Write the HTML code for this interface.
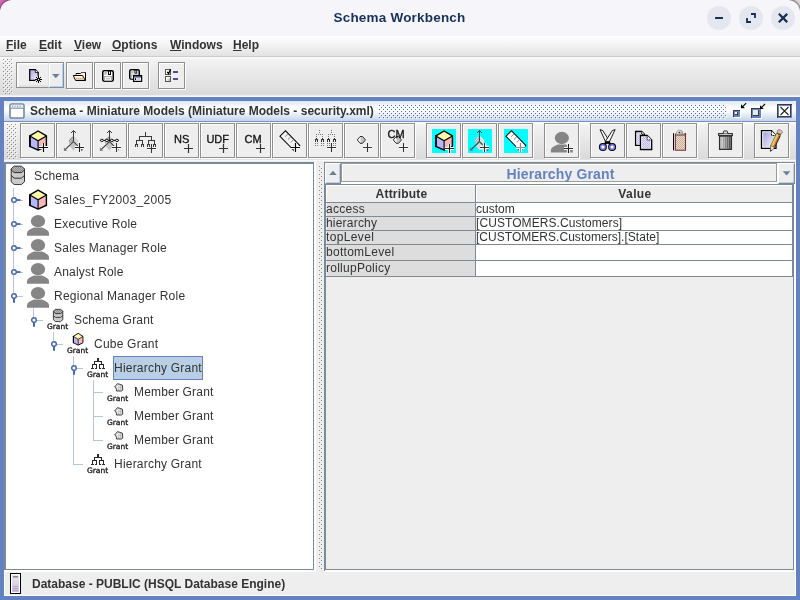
<!DOCTYPE html>
<html lang="en"><head><meta charset="utf-8"><title>Schema Workbench</title>
<style>
*{margin:0;padding:0;box-sizing:border-box}
html,body{width:800px;height:600px;overflow:hidden}
body{position:relative;background:#f6f6fa;font-family:"Liberation Sans",sans-serif;font-size:12px;color:#333;line-height:1}
.a{position:absolute}
.t{position:absolute;white-space:nowrap;line-height:14px;height:14px}
.b{font-weight:bold}
u{text-decoration:underline;text-decoration-thickness:1px;text-underline-offset:1px}
/* window title */
#corner-l{left:0;top:0;width:16px;height:16px;background:linear-gradient(135deg,#cf6fb8,#b85aa4)}
#corner-r{right:0;top:0;width:16px;height:16px;background:linear-gradient(225deg,#dedcd6,#bab7b0)}
#titlebar{left:0;top:0;width:800px;height:36px;background:#f6f6fa;box-shadow:0 0 1.500px 0.500px rgba(70,20,70,.55);border-radius:12px 12px 0 0}
#wtitle{left:0;width:799px;top:9.500px;text-align:center;letter-spacing:.2px;font-size:13.500px;line-height:16px;height:16px;color:#17325a;font-weight:bold}
.wb{width:24px;height:24px;border-radius:12px;background:#e4e7ef;top:6px}
#menubar{left:0;top:36px;width:800px;height:20px;background:linear-gradient(#ffffff,#f4f4f4 40%,#e2e2e2)}
#menuline{left:0;top:56px;width:800px;height:1px;background:#cccccc}
#tb1{left:0;top:57px;width:800px;height:40px;background:linear-gradient(#fbfbfb,#f2f2f2 8%,#dadada 95%,#fafafa 97%)}
.btn{position:absolute;border:1px solid #8e8e8e;background:#eeeeee;box-shadow:inset 1px 1px 0 #fff,1px 1px 0 #fff}
.btn svg{position:absolute;left:0;top:0}
/* internal frame */
#frame{left:0;top:97px;width:800px;height:503px;background:#6382bf}
#finner{left:4px;top:101px;width:792px;height:495px;background:#fff}
#ftitle{left:4px;top:101px;width:792px;height:20px;background:linear-gradient(#dde7f4,#ffffff 35%,#fbfcfe 50%,#c3d4eb);border-radius:3px 3px 0 0}
#fbody{left:5px;top:122px;width:790px;height:473px;background:#eeeeee}
#tb2{left:4px;top:122px;width:792px;height:40px;background:linear-gradient(#fdfdfd,#f2f2f2 8%,#dadada 93%,#fafafa 96%,#e6e6e6)}
.bumps{background-image:radial-gradient(circle at 1px 1px,#6382bf 0.9px,transparent 1.1px);background-size:4px 4px}
.dots{background-image:radial-gradient(circle at 1px 1px,#9aa4ae 0.8px,transparent 1.1px),radial-gradient(circle at 3px 3px,#9aa4ae 0.8px,transparent 1.1px);background-size:4px 4px}
#tree{left:4px;top:162px;width:310px;height:408px;background:#fff;border:1px solid #7a8a99;border-left-width:2px;border-top-width:2px}
#rpane{left:324px;top:162px;width:471px;height:408px;background:#eeeeee;border-top:1px solid #7a8a99;border-left:1px solid #7a8a99}
.vl{position:absolute;width:1px;background:#b2c5df}
.hl{position:absolute;height:1px;background:#b2c5df}
.tl{background:#7a8a99;position:absolute}
.ac{position:absolute;left:327px;width:148px;background:#dddddd;height:13px}
.vc{position:absolute;left:476px;width:316px;background:#fff;height:13px}
#w{left:0;top:0;width:800px;height:600px;will-change:transform;overflow:hidden}
</style></head>
<body>
<div class="a" id="w">
<div class="a" id="corner-l"></div><div class="a" id="corner-r"></div>
<div class="a" id="titlebar"></div>
<div class="t" id="wtitle">Schema Workbench</div>
<div class="a wb" style="left:707px"><svg width="24" height="24" viewBox="0 0 24 24" ><rect x="8" y="11" width="8" height="2" rx=".5" fill="#12305a"/></svg></div>
<div class="a wb" style="left:739px"><svg width="24" height="24" viewBox="0 0 24 24" ><path d="M12 8h4v4M12 16H8v-4" stroke="#12305a" stroke-width="1.8" fill="none"/></svg></div>
<div class="a wb" style="left:771px"><svg width="24" height="24" viewBox="0 0 24 24" ><path d="M8.600 8.600l6.800 6.800M15.400 8.600l-6.800 6.800" stroke="#12305a" stroke-width="2.200" fill="none" stroke-linecap="square"/></svg></div>
<div class="a" id="menubar"></div><div class="a" id="menuline"></div>
<div class="t b" style="left:6px;top:38px"><u>F</u>ile</div>
<div class="t b" style="left:39px;top:38px"><u>E</u>dit</div>
<div class="t b" style="left:74px;top:38px"><u>V</u>iew</div>
<div class="t b" style="left:112px;top:38px"><u>O</u>ptions</div>
<div class="t b" style="left:170px;top:38px"><u>W</u>indows</div>
<div class="t b" style="left:233px;top:38px"><u>H</u>elp</div>
<div class="a" id="tb1"></div>
<div class="a" style="left:3px;top:59px;width:10px;height:35px"><svg width="10" height="35" viewBox="0 0 10 35" shape-rendering="crispEdges"><defs><pattern id="dp1" width="4" height="4" patternUnits="userSpaceOnUse"><rect x="0" y="0" width="1" height="1" fill="#8e8e8e"/><rect x="1" y="1" width="1" height="1" fill="#fff"/><rect x="2" y="2" width="1" height="1" fill="#8e8e8e"/><rect x="3" y="3" width="1" height="1" fill="#fff"/></pattern></defs><rect width="10" height="35" fill="url(#dp1)"/></svg></div>
<div class="a" style="left:16px;top:62px;width:33px;height:26px;border:1px solid #8e8e8e;border-right:none;background:#eee;box-shadow:inset 1px 1px 0 #fff,inset 2px 2px 0 #f4f4f4,inset 0 -2px 0 #e2e2e2"><svg width="31" height="24" viewBox="0 0 31 24" ><defs><linearGradient id="lav" x1="0" y1="0" x2="1" y2="1"><stop offset="0" stop-color="#a4a4dc"/><stop offset="1" stop-color="#f6f6ff"/></linearGradient></defs><path d="M12.700 6.700H18.300L21.200 9.600V17.300H12.700Z" fill="url(#lav)" stroke="#000" stroke-width="1.250" stroke-linejoin="miter"/><path d="M18.300 6.700V9.600H21.200" fill="#fff" stroke="#000" stroke-width=".8"/><circle cx="21.5" cy="16.5" r="3.200" fill="#eee"/><path d="M18.0 16.5H25.0M21.5 13.0V20.0M19.0 14.0l5 5M24.0 14.0l-5 5" stroke="#000" stroke-width="1"/><circle cx="21.5" cy="16.5" r=".7" fill="#eee"/></svg></div>
<div class="a" style="left:48px;top:62px;width:16px;height:26px;border-top:1px solid #8e8e8e;border-left:1px solid #e0e0e0;border-right:1px solid #7a8fa8;border-bottom:1px solid #7a8fa8;background:#eee;box-shadow:inset 1px 1px 0 #fff,inset -1px -1px 0 #b8cfe5"><svg width="14" height="24" viewBox="0 0 14 24" ><path d="M3 11h7.600l-3.800 4.200z" fill="#6b7f96"/></svg></div>
<div class="btn" style="left:66px;top:62px;width:27px;height:27px"><svg width="25" height="25" viewBox="0 0 25 25" ><g transform="translate(-67 -63)"><path d="M76 74.600V73.500H80.600L81.600 72.500H85.500V80.500H82" fill="#fdf3e4" stroke="#000" stroke-width="1"/><path d="M81.400 72.500H85.900" stroke="#8c2a2a" stroke-width="1"/><path d="M73.300 75.500H82.600L85.200 80.500H75.600Z" fill="#fff" stroke="#000" stroke-width="1" stroke-linejoin="round"/><path d="M75.300 77.400H83L84.200 80H76.500Z" fill="#ecc9a6"/><path d="M76 78.500h7.500" stroke="#c9a282" stroke-width="1" stroke-dasharray="1 1"/></g></svg></div>
<div class="btn" style="left:94px;top:62px;width:27px;height:27px"><svg width="25" height="25" viewBox="0 0 25 25" ><g transform="translate(-95 -63)"><rect x="102.75" y="70.75" width="10.5" height="10.5" rx="1.400" fill="#fff" stroke="#000" stroke-width="1.500"/><rect x="104.2" y="71.3" width="3.0" height="3.4" fill="#bdbdbd"/><rect x="108.0" y="71" width="3.0" height="4.0" fill="#000"/><rect x="109.0" y="71.6" width="1.0" height="2.4" fill="#fff"/><rect x="104.5" y="76.5" width="7.0" height="4.3" fill="#f6f6f6" stroke="#9a9a9a" stroke-width=".8"/><rect x="106.0" y="78.0" width="4.0" height="1.3" fill="#bdbdbd"/></g></svg></div>
<div class="btn" style="left:122px;top:62px;width:27px;height:27px"><svg width="25" height="25" viewBox="0 0 25 25" ><g transform="translate(-123 -63)"><rect x="129.75" y="69.75" width="9.5" height="9.5" rx="1.400" fill="#fff" stroke="#000" stroke-width="1.500"/><rect x="131.03333333333333" y="70.3" width="2.75" height="3.1166666666666663" fill="#bdbdbd"/><rect x="134.5" y="70" width="2.75" height="3.6666666666666665" fill="#000"/><rect x="135.41666666666666" y="70.6" width="0.9166666666666666" height="2.1999999999999997" fill="#fff"/><rect x="131.29166666666666" y="74.95833333333333" width="6.416666666666666" height="3.9416666666666664" fill="#f6f6f6" stroke="#9a9a9a" stroke-width=".8"/><rect x="132.66666666666666" y="76.33333333333333" width="3.6666666666666665" height="1.1916666666666667" fill="#bdbdbd"/><rect x="133.600" y="75.600" width="8" height="5.800" fill="#fff" stroke="#000" stroke-width="1.200"/><rect x="134.200" y="76.200" width="6.800" height="1.300" fill="#2a2a8c"/><rect x="135" y="78.200" width="1.100" height="1.800" fill="#000"/><rect x="137" y="78.400" width="3" height="1.300" fill="#bdbdbd"/></g></svg></div>
<div class="btn" style="left:158px;top:62px;width:27px;height:27px"><svg width="25" height="25" viewBox="0 0 25 25" ><g transform="translate(-159 -63)"><rect x="165.500" y="69.500" width="5" height="5" fill="#fff" stroke="#555" stroke-width="1"/><path d="M167.300 71.800l1.300 1.800 2-4.300" stroke="#000" stroke-width="1.300" fill="none"/><rect x="165.500" y="76.500" width="5" height="5" fill="#fff" stroke="#555" stroke-width="1"/><rect x="167.500" y="78.500" width="2.500" height="2.500" fill="#c8c8c8"/><rect x="173" y="71" width="5" height="2" fill="#4e4e96"/><rect x="173" y="78" width="5" height="2" fill="#4e4e96"/></g></svg></div>
<div class="a" id="frame"></div>
<div class="a" id="finner"></div>
<div class="a" id="ftitle"></div>
<div class="a" style="left:4px;top:121px;width:792px;height:1px;background:#7a8fc0"></div>
<div class="a" id="fbody"></div>
<div class="a" id="tb2"></div>
<div class="a" style="left:9px;top:103px;width:16px;height:16px"><svg width="16" height="16" viewBox="0 0 16 16" ><rect x="1" y="1" width="14" height="14" rx="1.8" fill="#fff" stroke="#7389a0" stroke-width="1.6"/><rect x="1.8" y="1.8" width="12.4" height="3" fill="#e8eef6"/><path d="M1.5 5.2h13" stroke="#7389a0" stroke-width="1"/><path d="M3 3.2h10" stroke="#7389a0" stroke-width="1" stroke-dasharray="1 1.5"/></svg></div>
<div class="t b" style="left:30px;top:104px">Schema - Miniature Models (Miniature Models - security.xml)</div>
<div class="a" style="left:378px;top:104px;width:349px;height:15px"><svg width="349" height="15" viewBox="0 0 349 15" shape-rendering="crispEdges"><defs><pattern id="bp" width="4" height="4" patternUnits="userSpaceOnUse"><rect x="0" y="0" width="1" height="1" fill="#fff"/><rect x="1" y="1" width="1" height="1" fill="#4f6fbb"/><rect x="2" y="2" width="1" height="1" fill="#fff"/><rect x="3" y="3" width="1" height="1" fill="#4f6fbb"/></pattern></defs><rect width="349" height="15" fill="url(#bp)"/></svg></div>
<div class="a" style="left:732px;top:101px;width:62px;height:20px"><svg width="62" height="20" viewBox="0 0 62 20" ><g shape-rendering="crispEdges"><rect x="2" y="10" width="7" height="7" fill="#fff"/><rect x="1" y="9" width="7" height="7" fill="#6382bf"/><rect x="1" y="9" width="7" height="1" fill="#3c3c3c"/><rect x="1" y="9" width="1" height="7" fill="#3c3c3c"/><rect x="3" y="11" width="2" height="2" fill="#fff"/><rect x="5" y="11" width="1" height="3" fill="#3c3c3c"/><rect x="3" y="13" width="3" height="1" fill="#3c3c3c"/><rect x="20" y="8" width="10" height="10" fill="#fff"/><rect x="19" y="7" width="10" height="10" fill="#6382bf"/><rect x="19" y="7" width="9" height="1" fill="#3c3c3c"/><rect x="19" y="7" width="1" height="10" fill="#3c3c3c"/><rect x="21" y="9" width="5" height="5" fill="#e6edf6"/><rect x="26" y="9" width="1" height="6" fill="#3c3c3c"/><rect x="21" y="14" width="6" height="1" fill="#3c3c3c"/><rect x="45" y="3" width="15" height="14" fill="#6382bf"/><rect x="45" y="3" width="15" height="1" fill="#3c3c3c"/><rect x="45" y="3" width="1" height="14" fill="#3c3c3c"/><rect x="47" y="5" width="11" height="10" fill="#fff"/><rect x="58" y="4" width="1" height="12" fill="#3c3c3c"/><rect x="46" y="15" width="13" height="1" fill="#3c3c3c"/></g><path d="M14.200 2.200L9.700 6.700" stroke="#000" stroke-width="1.100" fill="none"/><path d="M9 3.200V7.200H13Z" fill="#000"/><path d="M33 3L28.600 7.500" stroke="#000" stroke-width="1.100" fill="none"/><path d="M28 4.200V8H31.800Z" fill="#000"/><path d="M48.500 6l8 8M56.500 6l-8 8" stroke="#222" stroke-width="1.100"/></svg></div>
<div class="a" style="left:7px;top:124px;width:10px;height:35px"><svg width="10" height="35" viewBox="0 0 10 35" shape-rendering="crispEdges"><defs><pattern id="dp2" width="4" height="4" patternUnits="userSpaceOnUse"><rect x="0" y="0" width="1" height="1" fill="#8e8e8e"/><rect x="1" y="1" width="1" height="1" fill="#fff"/><rect x="2" y="2" width="1" height="1" fill="#8e8e8e"/><rect x="3" y="3" width="1" height="1" fill="#fff"/></pattern></defs><rect width="10" height="35" fill="url(#dp2)"/></svg></div>
<div class="btn" style="left:20px;top:123px;width:35px;height:35px"><svg width="33" height="33" viewBox="0 0 33 33" ><g transform="translate(-21 -124)"><path d="M38.10 131.02L46.40 135.91L38.10 140.81L29.90 135.91Z" fill="#fbfaa6"/><path d="M29.90 135.91L38.10 140.81L38.10 150.19L29.90 146.32Z" fill="#b6b6fb"/><path d="M46.40 135.91L38.10 140.81L38.10 150.19L46.40 146.32Z" fill="#fbb6b6"/><path d="M38.10 131.02L46.40 135.91L46.40 146.32L38.10 150.19L29.90 146.32L29.90 135.91Z" fill="none" stroke="#000" stroke-width="1.4" stroke-linejoin="round"/><path d="M29.90 135.91L38.10 140.81L46.40 135.91M38.10 140.81L38.10 150.19" fill="none" stroke="#000" stroke-width="1.1199999999999999"/><path d="M29.90 135.91L29.90 146.32" fill="none" stroke="#000" stroke-width="1.68" stroke-linecap="round"/><path d="M39.0 147.5H48.0M43.5 143.0V152.0" stroke="#fff" stroke-width="3" fill="none"/><path d="M39.0 147.5H48.0M43.5 143.0V152.0" stroke="#000" stroke-width="1.2" fill="none"/></g></svg></div>
<div class="btn" style="left:56px;top:123px;width:35px;height:35px"><svg width="33" height="33" viewBox="0 0 33 33" ><g transform="translate(-57 -124)"><defs><pattern id="hx56" width="2" height="2" patternUnits="userSpaceOnUse" patternTransform="rotate(45)"><path d="M0 0h2M0 0v2" stroke="#3a3a3a" stroke-width=".8"/></pattern><pattern id="hy56" width="2" height="2" patternUnits="userSpaceOnUse" patternTransform="rotate(45)"><path d="M0 0h2M0 0v2" stroke="#8a8a8a" stroke-width=".5"/></pattern></defs><path d="M73.5 135.4L68.9 139.6V143.79999999999998L73.5 141.6Z" fill="url(#hx56)"/><path d="M73.5 135.79999999999998L78.1 140.0V144.2L73.5 141.6Z" fill="url(#hy56)"/><path d="M73.5 142.2L69.9 146.2L73.5 150.6L77.1 146.2Z" fill="#c4c4c4"/><path d="M73.5 141.6V130.79999999999998M71.0 133.0L73.5 130.5L76.0 133.0" stroke="#3a3a3a" stroke-width="1" fill="none" stroke-linejoin="round"/><path d="M73.5 141.6L64.3 150.4" stroke="#3a3a3a" stroke-width="1.1" fill="none"/><path d="M63.9 150.79999999999998v-3.400l3.400 3.400z" fill="#777"/><path d="M73.5 141.6L82.1 150.2" stroke="#3a3a3a" stroke-width="1.1" fill="none"/><path d="M82.5 150.6v-2.600l-2.600 2.600z" fill="#555"/><path d="M75.0 147.5H84.0M79.5 143.0V152.0" stroke="#fff" stroke-width="3" fill="none"/><path d="M75.0 147.5H84.0M79.5 143.0V152.0" stroke="#222" stroke-width="1.2" fill="none"/></g></svg></div>
<div class="btn" style="left:92px;top:123px;width:35px;height:35px"><svg width="33" height="33" viewBox="0 0 33 33" ><g transform="translate(-93 -124)"><defs><pattern id="hx92" width="2" height="2" patternUnits="userSpaceOnUse" patternTransform="rotate(45)"><path d="M0 0h2M0 0v2" stroke="#3a3a3a" stroke-width=".8"/></pattern><pattern id="hy92" width="2" height="2" patternUnits="userSpaceOnUse" patternTransform="rotate(45)"><path d="M0 0h2M0 0v2" stroke="#8a8a8a" stroke-width=".5"/></pattern></defs><path d="M109.5 135.4L104.9 139.6V143.79999999999998L109.5 141.6Z" fill="url(#hx92)"/><path d="M109.5 135.79999999999998L114.1 140.0V144.2L109.5 141.6Z" fill="url(#hy92)"/><path d="M109.5 142.2L105.9 146.2L109.5 150.6L113.1 146.2Z" fill="#c4c4c4"/><path d="M109.5 141.6V130.79999999999998M107.0 133.0L109.5 130.5L112.0 133.0" stroke="#3a3a3a" stroke-width="1" fill="none" stroke-linejoin="round"/><path d="M109.5 141.6L100.3 150.4" stroke="#3a3a3a" stroke-width="1.1" fill="none"/><path d="M99.9 150.79999999999998v-3.400l3.400 3.400z" fill="#777"/><path d="M109.5 141.6L118.1 150.2" stroke="#3a3a3a" stroke-width="1.1" fill="none"/><path d="M118.5 150.6v-2.600l-2.600 2.600z" fill="#555"/><path d="M100 140.400h19" stroke="#000" stroke-width="1"/><ellipse cx="101.9" cy="140.400" rx="1.500" ry="1.150" fill="#fff" stroke="#000" stroke-width=".9"/><ellipse cx="106.85" cy="140.400" rx="1.500" ry="1.150" fill="#fff" stroke="#000" stroke-width=".9"/><ellipse cx="111.85" cy="140.400" rx="1.500" ry="1.150" fill="#fff" stroke="#000" stroke-width=".9"/><ellipse cx="116.9" cy="140.400" rx="1.500" ry="1.150" fill="#fff" stroke="#000" stroke-width=".9"/><path d="M112.0 147.5H121.0M116.5 143.0V152.0" stroke="#fff" stroke-width="3" fill="none"/><path d="M112.0 147.5H121.0M116.5 143.0V152.0" stroke="#333" stroke-width="1.2" fill="none"/></g></svg></div>
<div class="btn" style="left:128px;top:123px;width:35px;height:35px"><svg width="33" height="33" viewBox="0 0 33 33" ><g transform="translate(-129 -124)"><g shape-rendering="crispEdges"><rect x="145" y="132" width="1" height="4" fill="#3a3a3a"/><rect x="139" y="136" width="13" height="1" fill="#3a3a3a"/><rect x="139" y="136" width="1" height="5" fill="#3a3a3a"/><rect x="151" y="136" width="1" height="5" fill="#3a3a3a"/><rect x="136" y="140" width="7" height="1" fill="#3a3a3a"/><rect x="148" y="140" width="7" height="1" fill="#3a3a3a"/><rect x="136" y="140" width="1" height="4" fill="#3a3a3a"/><rect x="135" y="144" width="3" height="1" fill="#3a3a3a"/><rect x="135" y="145" width="1" height="2" fill="#3a3a3a"/><rect x="137" y="145" width="1" height="2" fill="#3a3a3a"/><rect x="142" y="140" width="1" height="4" fill="#3a3a3a"/><rect x="141" y="144" width="3" height="1" fill="#3a3a3a"/><rect x="141" y="145" width="1" height="2" fill="#3a3a3a"/><rect x="143" y="145" width="1" height="2" fill="#3a3a3a"/><rect x="148" y="140" width="1" height="4" fill="#3a3a3a"/><rect x="147" y="144" width="3" height="1" fill="#3a3a3a"/><rect x="147" y="145" width="1" height="2" fill="#3a3a3a"/><rect x="149" y="145" width="1" height="2" fill="#3a3a3a"/><rect x="154" y="140" width="1" height="4" fill="#3a3a3a"/><rect x="153" y="144" width="3" height="1" fill="#3a3a3a"/><rect x="153" y="145" width="1" height="2" fill="#3a3a3a"/><rect x="155" y="145" width="1" height="2" fill="#3a3a3a"/></g><path d="M147.0 148.5H156.0M151.5 144.0V153.0" stroke="#fff" stroke-width="3" fill="none"/><path d="M147.0 148.5H156.0M151.5 144.0V153.0" stroke="#333" stroke-width="1.2" fill="none"/></g></svg></div>
<div class="btn" style="left:164px;top:123px;width:35px;height:35px"><svg width="33" height="33" viewBox="0 0 33 33" ><g transform="translate(-165 -124)"><text x="174" y="143.4" font-family="Liberation Sans, sans-serif" font-size="11" font-weight="normal" fill="#111" stroke="#111" stroke-width=".3">NS</text><path d="M184.0 148.5H193.0M188.5 144.0V153.0" stroke="#333" stroke-width="1.2" fill="none"/></g></svg></div>
<div class="btn" style="left:200px;top:123px;width:35px;height:35px"><svg width="33" height="33" viewBox="0 0 33 33" ><g transform="translate(-201 -124)"><text x="206.4" y="143.4" font-family="Liberation Sans, sans-serif" font-size="11" font-weight="normal" fill="#111" stroke="#111" stroke-width=".3">UDF</text><path d="M219.0 148.5H228.0M223.5 144.0V153.0" stroke="#333" stroke-width="1.2" fill="none"/></g></svg></div>
<div class="btn" style="left:236px;top:123px;width:35px;height:35px"><svg width="33" height="33" viewBox="0 0 33 33" ><g transform="translate(-237 -124)"><text x="244.5" y="143.4" font-family="Liberation Sans, sans-serif" font-size="11" font-weight="normal" fill="#111" stroke="#111" stroke-width=".3">CM</text><path d="M256.0 148.5H265.0M260.5 144.0V153.0" stroke="#333" stroke-width="1.2" fill="none"/></g></svg></div>
<div class="btn" style="left:272px;top:123px;width:35px;height:35px"><svg width="33" height="33" viewBox="0 0 33 33" ><g transform="translate(-273 -124)"><g transform="translate(282.7 133.500) rotate(45.500)"><rect x="0" y="-3.900" width="20.500" height="7.800" fill="#f2f2f2" stroke="#000" stroke-width="1"/><path d="M4 -3.500v4" stroke="#777" stroke-width=".8"/><path d="M8 -3.500v4" stroke="#777" stroke-width=".8"/><path d="M12 -3.500v4" stroke="#777" stroke-width=".8"/><path d="M16 -3.500v4" stroke="#777" stroke-width=".8"/></g><path d="M291.0 147.5H300.0M295.5 143.0V152.0" stroke="#fff" stroke-width="3" fill="none"/><path d="M291.0 147.5H300.0M295.5 143.0V152.0" stroke="#000" stroke-width="1.2" fill="none"/></g></svg></div>
<div class="btn" style="left:308px;top:123px;width:35px;height:35px"><svg width="33" height="33" viewBox="0 0 33 33" ><g transform="translate(-309 -124)"><g shape-rendering="crispEdges"><rect x="319" y="130" width="1" height="1" fill="#7a7a7a"/><rect x="319" y="132" width="1" height="1" fill="#7a7a7a"/><rect x="316" y="134" width="1" height="1" fill="#7a7a7a"/><rect x="318" y="134" width="1" height="1" fill="#7a7a7a"/><rect x="320" y="134" width="1" height="1" fill="#7a7a7a"/><rect x="322" y="134" width="1" height="1" fill="#7a7a7a"/><rect x="316" y="136" width="1" height="1" fill="#7a7a7a"/><rect x="322" y="136" width="1" height="1" fill="#7a7a7a"/><rect x="316" y="138" width="1" height="1" fill="#333"/><rect x="315" y="139" width="3" height="1" fill="#333"/><rect x="315" y="140" width="1" height="2" fill="#333"/><rect x="317" y="140" width="1" height="2" fill="#333"/><rect x="315" y="143" width="1" height="1" fill="#7a7a7a"/><rect x="317" y="143" width="1" height="1" fill="#7a7a7a"/><rect x="315" y="145" width="1" height="1" fill="#7a7a7a"/><rect x="317" y="145" width="1" height="1" fill="#7a7a7a"/><rect x="322" y="138" width="1" height="1" fill="#333"/><rect x="321" y="139" width="3" height="1" fill="#333"/><rect x="321" y="140" width="1" height="2" fill="#333"/><rect x="323" y="140" width="1" height="2" fill="#333"/><rect x="321" y="143" width="1" height="1" fill="#7a7a7a"/><rect x="323" y="143" width="1" height="1" fill="#7a7a7a"/><rect x="321" y="145" width="1" height="1" fill="#7a7a7a"/><rect x="323" y="145" width="1" height="1" fill="#7a7a7a"/><rect x="331" y="130" width="1" height="1" fill="#7a7a7a"/><rect x="331" y="132" width="1" height="1" fill="#7a7a7a"/><rect x="328" y="134" width="1" height="1" fill="#7a7a7a"/><rect x="330" y="134" width="1" height="1" fill="#7a7a7a"/><rect x="332" y="134" width="1" height="1" fill="#7a7a7a"/><rect x="334" y="134" width="1" height="1" fill="#7a7a7a"/><rect x="328" y="136" width="1" height="1" fill="#7a7a7a"/><rect x="334" y="136" width="1" height="1" fill="#7a7a7a"/><rect x="328" y="138" width="1" height="1" fill="#333"/><rect x="327" y="139" width="3" height="1" fill="#333"/><rect x="327" y="140" width="1" height="2" fill="#333"/><rect x="329" y="140" width="1" height="2" fill="#333"/><rect x="327" y="143" width="1" height="1" fill="#7a7a7a"/><rect x="329" y="143" width="1" height="1" fill="#7a7a7a"/><rect x="327" y="145" width="1" height="1" fill="#7a7a7a"/><rect x="329" y="145" width="1" height="1" fill="#7a7a7a"/><rect x="334" y="138" width="1" height="1" fill="#333"/><rect x="333" y="139" width="3" height="1" fill="#333"/><rect x="333" y="140" width="1" height="2" fill="#333"/><rect x="335" y="140" width="1" height="2" fill="#333"/><rect x="333" y="143" width="1" height="1" fill="#7a7a7a"/><rect x="335" y="143" width="1" height="1" fill="#7a7a7a"/><rect x="333" y="145" width="1" height="1" fill="#7a7a7a"/><rect x="335" y="145" width="1" height="1" fill="#7a7a7a"/></g><path d="M327.0 147.5H336.0M331.5 143.0V152.0" stroke="#fff" stroke-width="3" fill="none"/><path d="M327.0 147.5H336.0M331.5 143.0V152.0" stroke="#333" stroke-width="1.2" fill="none"/></g></svg></div>
<div class="btn" style="left:344px;top:123px;width:35px;height:35px"><svg width="33" height="33" viewBox="0 0 33 33" ><g transform="translate(-345 -124)"><path d="M357.3 139.900L360 136.500H362.6L365.5 139.900L362.6 143.300H360Z" fill="#fff" stroke="#fff" stroke-width="2" stroke-linejoin="round" opacity=".7"/><path d="M360.6 136.800H362.6L365.2 139.900L362.6 143H360.6Z" fill="#c2c2c2"/><path d="M357.3 139.900L360 136.500H362.6L365.5 139.900L362.6 143.300H360Z" fill="none" stroke="#2a2a2a" stroke-width="1" stroke-linejoin="round"/><path d="M363.0 147.5H372.0M367.5 143.0V152.0" stroke="#fff" stroke-width="3" fill="none"/><path d="M363.0 147.5H372.0M367.5 143.0V152.0" stroke="#333" stroke-width="1.2" fill="none"/></g></svg></div>
<div class="btn" style="left:380px;top:123px;width:35px;height:35px"><svg width="33" height="33" viewBox="0 0 33 33" ><g transform="translate(-381 -124)"><path d="M393.3 139.900L396 136.500H398.6L401.5 139.900L398.6 143.300H396Z" fill="#fff" stroke="#fff" stroke-width="2" stroke-linejoin="round" opacity=".7"/><path d="M396.6 136.800H398.6L401.2 139.900L398.6 143H396.6Z" fill="#c2c2c2"/><path d="M393.3 139.900L396 136.500H398.6L401.5 139.900L398.6 143.300H396Z" fill="none" stroke="#2a2a2a" stroke-width="1" stroke-linejoin="round"/><text x="387.5" y="137.6" font-family="Liberation Sans, sans-serif" font-size="11" font-weight="normal" fill="#111" stroke="#111" stroke-width=".3">CM</text><path d="M399.0 147.5H408.0M403.5 143.0V152.0" stroke="#fff" stroke-width="3" fill="none"/><path d="M399.0 147.5H408.0M403.5 143.0V152.0" stroke="#333" stroke-width="1.2" fill="none"/></g></svg></div>
<div class="btn" style="left:426px;top:123px;width:35px;height:35px"><svg width="33" height="33" viewBox="0 0 33 33" ><g transform="translate(-427 -124)"><rect x="432" y="129" width="24" height="24" fill="#00ffff" shape-rendering="crispEdges"/><path d="M444.10 131.02L452.40 135.91L444.10 140.81L435.90 135.91Z" fill="#fbfaa6"/><path d="M435.90 135.91L444.10 140.81L444.10 150.19L435.90 146.32Z" fill="#b6b6fb"/><path d="M452.40 135.91L444.10 140.81L444.10 150.19L452.40 146.32Z" fill="#fbb6b6"/><path d="M444.10 131.02L452.40 135.91L452.40 146.32L444.10 150.19L435.90 146.32L435.90 135.91Z" fill="none" stroke="#000" stroke-width="1.4" stroke-linejoin="round"/><path d="M435.90 135.91L444.10 140.81L452.40 135.91M444.10 140.81L444.10 150.19" fill="none" stroke="#000" stroke-width="1.1199999999999999"/><path d="M435.90 135.91L435.90 146.32" fill="none" stroke="#000" stroke-width="1.68" stroke-linecap="round"/><path d="M445.0 148.5H454.0M449.5 144.0V153.0" stroke="#fff" stroke-width="3" fill="none"/><path d="M445.0 148.5H454.0M449.5 144.0V153.0" stroke="#222" stroke-width="1.2" fill="none"/></g></svg></div>
<div class="btn" style="left:462px;top:123px;width:35px;height:35px"><svg width="33" height="33" viewBox="0 0 33 33" ><g transform="translate(-463 -124)"><rect x="468" y="129" width="24" height="24" fill="#00ffff" shape-rendering="crispEdges"/><defs><pattern id="hx462" width="2" height="2" patternUnits="userSpaceOnUse" patternTransform="rotate(45)"><path d="M0 0h2M0 0v2" stroke="#666" stroke-width=".8"/></pattern><pattern id="hy462" width="2" height="2" patternUnits="userSpaceOnUse" patternTransform="rotate(45)"><path d="M0 0h2M0 0v2" stroke="#aaa" stroke-width=".5"/></pattern></defs><path d="M479.5 135.4L474.9 139.6V143.79999999999998L479.5 141.6L484.1 144.2V140.0Z" fill="#eef4f4"/><path d="M479.5 135.4L474.9 139.6V143.79999999999998L479.5 141.6Z" fill="url(#hx462)"/><path d="M479.5 135.79999999999998L484.1 140.0V144.2L479.5 141.6Z" fill="url(#hy462)"/><path d="M479.5 142.2L475.9 146.2L479.5 150.6L483.1 146.2Z" fill="#d8d8d8"/><path d="M479.5 141.6V130.79999999999998M477.0 133.0L479.5 130.5L482.0 133.0" stroke="#3a3a3a" stroke-width="1" fill="none" stroke-linejoin="round"/><path d="M479.5 141.6L470.3 150.4" stroke="#3a3a3a" stroke-width="1.1" fill="none"/><path d="M469.9 150.79999999999998v-3.400l3.400 3.400z" fill="#777"/><path d="M479.5 141.6L488.1 150.2" stroke="#3a3a3a" stroke-width="1.1" fill="none"/><path d="M488.5 150.6v-2.600l-2.600 2.600z" fill="#555"/><path d="M480.0 147.5H489.0M484.5 143.0V152.0" stroke="#fff" stroke-width="3.4" fill="none"/><path d="M480.0 147.5H489.0M484.5 143.0V152.0" stroke="#333" stroke-width="1.2" fill="none"/></g></svg></div>
<div class="btn" style="left:498px;top:123px;width:35px;height:35px"><svg width="33" height="33" viewBox="0 0 33 33" ><g transform="translate(-499 -124)"><rect x="504" y="129" width="24" height="24" fill="#00ffff" shape-rendering="crispEdges"/><g transform="translate(508.7 133.500) rotate(45.500)"><rect x="0" y="-3.900" width="20.500" height="7.800" fill="#fff" stroke="#000" stroke-width="1"/><path d="M4 -3.500v4" stroke="#777" stroke-width=".8"/><path d="M8 -3.500v4" stroke="#777" stroke-width=".8"/><path d="M12 -3.500v4" stroke="#777" stroke-width=".8"/><path d="M16 -3.500v4" stroke="#777" stroke-width=".8"/></g><path d="M516.0 147.5H525.0M520.5 143.0V152.0" stroke="#fff" stroke-width="3.2" fill="none"/><path d="M516.0 147.5H525.0M520.5 143.0V152.0" stroke="#8a8a8a" stroke-width="1.2" fill="none"/></g></svg></div>
<div class="btn" style="left:544px;top:123px;width:35px;height:35px"><svg width="33" height="33" viewBox="0 0 33 33" ><g transform="translate(-545 -124)"><ellipse cx="561.85" cy="138" rx="7.100" ry="6.150" fill="#858585"/><path d="M550.85 152.6v-2.800c.3-2.300 3-3.600 7-5.400h8c4 1.800 6.700 3.100 7 5.400v2.800z" fill="#858585"/><path d="M564.0 148.5H573.0M568.5 144.0V153.0" stroke="#fff" stroke-width="3.2" fill="none"/><path d="M564.0 148.5H573.0M568.5 144.0V153.0" stroke="#222" stroke-width="1.2" fill="none"/></g></svg></div>
<div class="btn" style="left:590px;top:123px;width:35px;height:35px"><svg width="33" height="33" viewBox="0 0 33 33" ><g transform="translate(-591 -124)"><path d="M600 129.600L602.8 130.600L610 142L606.6 143.800Z" fill="#fff" stroke="#000" stroke-width=".9" stroke-linejoin="round"/><path d="M615.1 129.600L612.3 130.600L605 142L608.4 143.800Z" fill="#fff" stroke="#000" stroke-width=".9" stroke-linejoin="round"/><path d="M607.5 141.500l-3 2.500M607.5 141.500l3 2.500" stroke="#000" stroke-width="1.800" fill="none"/><circle cx="602.9" cy="147" r="4" fill="#000"/><circle cx="602.9" cy="147" r="3.100" fill="#7474e2"/><circle cx="602.9" cy="147" r="1.500" fill="#fff"/><circle cx="612.1" cy="147" r="4" fill="#000"/><circle cx="612.1" cy="147" r="3.100" fill="#7474e2"/><circle cx="612.1" cy="147" r="1.500" fill="#fff"/></g></svg></div>
<div class="btn" style="left:626px;top:123px;width:35px;height:35px"><svg width="33" height="33" viewBox="0 0 33 33" ><g transform="translate(-627 -124)"><defs><pattern id="pd" width="2" height="2" patternUnits="userSpaceOnUse"><rect width="2" height="2" fill="#e2e2fa"/><rect width="1" height="1" fill="#b8b8ea"/><rect x="1" y="1" width="1" height="1" fill="#b8b8ea"/></pattern></defs><path d="M635.6 131.5H641.6L644.4 134.3V145.3H635.6Z" fill="#fff" stroke="#000" stroke-width="1.300" stroke-linejoin="miter"/><path d="M637.2 133.1H640.6L643.1999999999999 134.9V144.10000000000002H637.2Z" fill="url(#pd)"/><path d="M641.6 131.5V134.3H644.4" fill="#fff" stroke="#000" stroke-width="1" stroke-dasharray="1 .6"/><path d="M640.5 135.5H647.2L651.7 140.0V149.5H640.5Z" fill="#fff" stroke="#000" stroke-width="1.300" stroke-linejoin="miter"/><path d="M642.1 137.1H646.2L650.5 140.6V148.3H642.1Z" fill="url(#pd)"/><path d="M647.2 135.5V140.0H651.7" fill="#fff" stroke="#000" stroke-width="1" stroke-dasharray="1 .6"/></g></svg></div>
<div class="btn" style="left:662px;top:123px;width:35px;height:35px"><svg width="33" height="33" viewBox="0 0 33 33" ><g transform="translate(-663 -124)"><defs><pattern id="pt" width="2" height="2" patternUnits="userSpaceOnUse"><rect width="2" height="2" fill="#eadccf"/><rect width="1" height="1" fill="#c9ad98"/><rect x="1" y="1" width="1" height="1" fill="#c9ad98"/></pattern><linearGradient id="clipg" x1="0" y1="0" x2="1" y2="1"><stop offset="0" stop-color="#fff"/><stop offset="1" stop-color="#999"/></linearGradient></defs><path d="M673.5 133.200V150.400" stroke="#000" stroke-width="1"/><path d="M674.6 134V150" stroke="#fff" stroke-width="1"/><path d="M675.3 133.500V135H685V133.500H685.5V150.200H675.3Z" fill="url(#pt)" stroke="#7a2e2e" stroke-width="1.100"/><path d="M676.2 134.600c0-2.800 1.300-4.600 3.400-4.600s3.400 1.800 3.400 4.600z" fill="url(#clipg)" stroke="#666" stroke-width=".5"/><circle cx="679.4" cy="132.500" r=".8" fill="#222"/></g></svg></div>
<div class="btn" style="left:708px;top:123px;width:35px;height:35px"><svg width="33" height="33" viewBox="0 0 33 33" ><g transform="translate(-709 -124)"><defs><linearGradient id="trg" x1="0" y1="0" x2="1" y2="0"><stop offset="0" stop-color="#e0e0e0"/><stop offset="1" stop-color="#8c8c8c"/></linearGradient></defs><rect x="719.6" y="136" width="11.800" height="13.300" fill="url(#trg)" stroke="#2c2c2c" stroke-width="1.300"/><path d="M721.7 137.200V148.400" stroke="#bbb" stroke-width=".9"/><path d="M723.7 137.200V148.400" stroke="#999" stroke-width=".9"/><path d="M725.7 137.200V148.400" stroke="#777" stroke-width=".9"/><path d="M727.7 137.200V148.400" stroke="#555" stroke-width=".9"/><path d="M729.6 137.200V148.400" stroke="#444" stroke-width=".9"/><rect x="718.6" y="133.600" width="13.800" height="2" fill="#e4e4e4" stroke="#2c2c2c" stroke-width="1.100"/><path d="M723.4 133.400v-1.600c0-.4 .4-.8 .8-.8h2.600c.4 0 .8 .4 .8 .8v1.600" fill="#ddd" stroke="#2c2c2c" stroke-width="1"/></g></svg></div>
<div class="btn" style="left:754px;top:123px;width:35px;height:35px"><svg width="33" height="33" viewBox="0 0 33 33" ><g transform="translate(-755 -124)"><defs><linearGradient id="lav" x1="0" y1="0" x2="1" y2="1"><stop offset="0" stop-color="#a4a4dc"/><stop offset="1" stop-color="#f6f6ff"/></linearGradient></defs><path d="M761.5 130.700H771.5L776 135.500V148.300H761.5Z" fill="#fff" stroke="#000" stroke-width="1.300"/><path d="M763.2 132.300H770.5L774.8 136.500V147.100H763.2Z" fill="url(#lav)"/><path d="M771.5 130.700V135.500H776" fill="#fff" stroke="#000" stroke-width="1" stroke-dasharray="1 .6"/><g transform="translate(779.5 132.500) rotate(25.600)"><rect x="-2.600" y="-2.600" width="5.200" height="4" rx="2" fill="#f4b4b4" stroke="#444" stroke-width=".5"/><rect x="-2.400" y="1.200" width="4.800" height="1.400" fill="#1e6a2a"/><rect x="-2.400" y="2.600" width="4.800" height="13" fill="#e8d23c"/><rect x=".2" y="2.600" width="1.300" height="13" fill="#e25a5a"/><rect x="1.500" y="2.600" width="1" height="13" fill="#222"/><rect x="-2.600" y="2.600" width=".6" height="13" fill="#555"/><path d="M-2.400 15.600h4.800l-2.400 5.400z" fill="#e6e6d2" stroke="#333" stroke-width=".5"/><path d="M-.8 19.200l.8 2 .8-2z" fill="#000"/></g></g></svg></div>
<div class="a" id="tree"></div>
<div class="a" style="left:319px;top:166px;width:3px;height:403px"><svg width="3" height="403" viewBox="0 0 3 403" shape-rendering="crispEdges"><defs><pattern id="dq" width="4" height="4" patternUnits="userSpaceOnUse"><rect x="0" y="0" width="1" height="1" fill="#7f8790"/><rect x="2" y="2" width="1" height="1" fill="#7f8790"/></pattern></defs><rect width="3" height="403" fill="url(#dq)"/></svg></div>
<div class="a" style="left:10px;top:165px;width:16px;height:20px"><svg width="16" height="20" viewBox="0 0 16 20" ><defs><pattern id="ch1" width="2" height="2" patternUnits="userSpaceOnUse"><rect width="2" height="2" fill="#b4b4b4"/><rect width="1" height="1" fill="#8e8e8e"/><rect x="1" y="1" width="1" height="1" fill="#8e8e8e"/></pattern></defs><path d="M1.20 4.40L1.20 16.70L4.20 19.60L11.30 19.60L14.50 16.70L14.50 4.40Z" fill="#cbcbcb" stroke="#2e2e2e" stroke-width="1.0" stroke-linejoin="round"/><path d="M1.20 10.50L4.20 13.20L11.30 13.20L14.50 10.50" fill="none" stroke="#2e2e2e" stroke-width="1.0" stroke-linejoin="round"/><path d="M4.20 1.20L11.30 1.20L14.50 3.80L14.50 5.00L11.30 7.60L4.20 7.60L1.20 5.00L1.20 3.80Z" fill="url(#ch1)" stroke="#2e2e2e" stroke-width="1.0" stroke-linejoin="round"/></svg></div>
<div class="t" style="left:34px;top:169px;letter-spacing:0.2px">Schema</div>
<div class="a" style="left:26px;top:187px;width:24px;height:24px"><svg width="24" height="24" viewBox="0 0 24 24" ><path d="M12.10 3.11L20.40 7.96L12.10 12.80L3.90 7.96Z" fill="#fbfaa6"/><path d="M3.90 7.96L12.10 12.80L12.10 22.10L3.90 18.26Z" fill="#b6b6fb"/><path d="M20.40 7.96L12.10 12.80L12.10 22.10L20.40 18.26Z" fill="#fbb6b6"/><path d="M12.10 3.11L20.40 7.96L20.40 18.26L12.10 22.10L3.90 18.26L3.90 7.96Z" fill="none" stroke="#000" stroke-width="1.4" stroke-linejoin="round"/><path d="M3.90 7.96L12.10 12.80L20.40 7.96M12.10 12.80L12.10 22.10" fill="none" stroke="#000" stroke-width="1.1199999999999999"/><path d="M3.90 7.96L3.90 18.26" fill="none" stroke="#000" stroke-width="1.68" stroke-linecap="round"/></svg></div>
<div class="t" style="left:54px;top:193px;letter-spacing:0.31px">Sales_FY2003_2005</div>
<div class="a" style="left:26px;top:211px;width:24px;height:24px"><svg width="24" height="24" viewBox="0 0 24 24" overflow="visible"><ellipse cx="12" cy="10.2" rx="7.100" ry="6.150" fill="#858585"/><path d="M1 24.799999999999997v-2.800c.3-2.300 3-3.600 7-5.400h8c4 1.800 6.700 3.100 7 5.400v2.800z" fill="#858585"/></svg></div>
<div class="t" style="left:54px;top:217px;letter-spacing:0.23px">Executive Role</div>
<div class="a" style="left:26px;top:235px;width:24px;height:24px"><svg width="24" height="24" viewBox="0 0 24 24" overflow="visible"><ellipse cx="12" cy="10.2" rx="7.100" ry="6.150" fill="#858585"/><path d="M1 24.799999999999997v-2.800c.3-2.300 3-3.600 7-5.400h8c4 1.800 6.700 3.100 7 5.400v2.800z" fill="#858585"/></svg></div>
<div class="t" style="left:54px;top:241px;letter-spacing:0.235px">Sales Manager Role</div>
<div class="a" style="left:26px;top:259px;width:24px;height:24px"><svg width="24" height="24" viewBox="0 0 24 24" overflow="visible"><ellipse cx="12" cy="10.2" rx="7.100" ry="6.150" fill="#858585"/><path d="M1 24.799999999999997v-2.800c.3-2.300 3-3.600 7-5.400h8c4 1.800 6.700 3.100 7 5.400v2.800z" fill="#858585"/></svg></div>
<div class="t" style="left:54px;top:265px;letter-spacing:0.18px">Analyst Role</div>
<div class="a" style="left:26px;top:283px;width:24px;height:24px"><svg width="24" height="24" viewBox="0 0 24 24" overflow="visible"><ellipse cx="12" cy="10.2" rx="7.100" ry="6.150" fill="#858585"/><path d="M1 24.799999999999997v-2.800c.3-2.300 3-3.600 7-5.400h8c4 1.800 6.700 3.100 7 5.400v2.800z" fill="#858585"/></svg></div>
<div class="t" style="left:54px;top:289px;letter-spacing:0.25px">Regional Manager Role</div>
<div class="a" style="left:46px;top:307px;width:24px;height:24px"><svg width="24" height="24" viewBox="0 0 24 24" ><defs><pattern id="ch2" width="2" height="2" patternUnits="userSpaceOnUse"><rect width="2" height="2" fill="#b4b4b4"/><rect width="1" height="1" fill="#8e8e8e"/><rect x="1" y="1" width="1" height="1" fill="#8e8e8e"/></pattern></defs><path d="M7.40 4.52L7.40 12.68L9.52 14.60L14.54 14.60L16.80 12.68L16.80 4.52Z" fill="#cbcbcb" stroke="#2e2e2e" stroke-width="0.9" stroke-linejoin="round"/><path d="M7.40 8.57L9.52 10.36L14.54 10.36L16.80 8.57" fill="none" stroke="#2e2e2e" stroke-width="0.9" stroke-linejoin="round"/><path d="M9.52 2.40L14.54 2.40L16.80 4.12L16.80 4.92L14.54 6.64L9.52 6.64L7.40 4.92L7.40 4.12Z" fill="url(#ch2)" stroke="#2e2e2e" stroke-width="0.9" stroke-linejoin="round"/><text x="11.5" y="21.8" text-anchor="middle" font-family="DejaVu Sans, Liberation Sans, sans-serif" font-size="7.500" fill="#111" stroke="#111" stroke-width=".28">Grant</text></svg></div>
<div class="t" style="left:74px;top:313px;letter-spacing:0.18px">Schema Grant</div>
<div class="a" style="left:66px;top:331px;width:24px;height:24px"><svg width="24" height="24" viewBox="0 0 24 24" ><path d="M12.16 2.30L16.95 5.33L12.16 8.35L7.42 5.33Z" fill="#fbfaa6"/><path d="M7.42 5.33L12.16 8.35L12.16 14.15L7.42 11.75Z" fill="#b6b6fb"/><path d="M16.95 5.33L12.16 8.35L12.16 14.15L16.95 11.75Z" fill="#fbb6b6"/><path d="M12.16 2.30L16.95 5.33L16.95 11.75L12.16 14.15L7.42 11.75L7.42 5.33Z" fill="none" stroke="#000" stroke-width="0.9" stroke-linejoin="round"/><path d="M7.42 5.33L12.16 8.35L16.95 5.33M12.16 8.35L12.16 14.15" fill="none" stroke="#000" stroke-width="0.7200000000000001"/><path d="M7.42 5.33L7.42 11.75" fill="none" stroke="#000" stroke-width="1.08" stroke-linecap="round"/><text x="11.5" y="21.8" text-anchor="middle" font-family="DejaVu Sans, Liberation Sans, sans-serif" font-size="7.500" fill="#111" stroke="#111" stroke-width=".28">Grant</text></svg></div>
<div class="t" style="left:94px;top:337px;letter-spacing:0.22px">Cube Grant</div>
<div class="a" style="left:86px;top:355px;width:24px;height:24px"><svg width="24" height="24" viewBox="0 0 24 24" ><g shape-rendering="crispEdges"><rect x="11" y="3" width="2" height="3" fill="#2a2a2a"/><rect x="8" y="6" width="8" height="1" fill="#2a2a2a"/><rect x="8" y="6" width="1" height="4" fill="#2a2a2a"/><rect x="15" y="6" width="1" height="4" fill="#2a2a2a"/><rect x="6" y="9" width="5" height="1" fill="#2a2a2a"/><rect x="13" y="9" width="5" height="1" fill="#2a2a2a"/><rect x="6" y="9" width="1" height="5" fill="#2a2a2a"/><rect x="10" y="9" width="1" height="5" fill="#2a2a2a"/><rect x="13" y="9" width="1" height="5" fill="#2a2a2a"/><rect x="17" y="9" width="1" height="5" fill="#2a2a2a"/><rect x="5" y="13" width="3" height="1" fill="#2a2a2a"/><rect x="9" y="13" width="2" height="1" fill="#2a2a2a"/><rect x="13" y="13" width="2" height="1" fill="#2a2a2a"/><rect x="16" y="13" width="3" height="1" fill="#2a2a2a"/></g><text x="11.5" y="21.8" text-anchor="middle" font-family="DejaVu Sans, Liberation Sans, sans-serif" font-size="7.500" fill="#111" stroke="#111" stroke-width=".28">Grant</text></svg></div>
<div class="a" style="left:113px;top:356px;width:90px;height:24px;background:#b8cfe5;border:1px solid #6382bf"></div>
<div class="t" style="left:114px;top:361px;letter-spacing:0.21px">Hierarchy Grant</div>
<div class="a" style="left:106px;top:379px;width:24px;height:24px"><svg width="24" height="24" viewBox="0 0 24 24" ><path d="M8.600 8L11.600 4.600L16.400 6.200L16.800 11L15.400 12H10.600L10.200 9.400Z" fill="#dcdcdc" stroke="#2a2a2a" stroke-width=".9" stroke-linejoin="round"/><path d="M10.800 6.600h3v3h-3z" fill="#fff" opacity=".8"/><path d="M11 8.300h5M12.800 6.500v5M14.600 6.500v5" stroke="#aaa" stroke-width=".5"/><text x="11.5" y="21.8" text-anchor="middle" font-family="DejaVu Sans, Liberation Sans, sans-serif" font-size="7.500" fill="#111" stroke="#111" stroke-width=".28">Grant</text></svg></div>
<div class="t" style="left:134px;top:385px;letter-spacing:0.18px">Member Grant</div>
<div class="a" style="left:106px;top:403px;width:24px;height:24px"><svg width="24" height="24" viewBox="0 0 24 24" ><path d="M8.600 8L11.600 4.600L16.400 6.200L16.800 11L15.400 12H10.600L10.200 9.400Z" fill="#dcdcdc" stroke="#2a2a2a" stroke-width=".9" stroke-linejoin="round"/><path d="M10.800 6.600h3v3h-3z" fill="#fff" opacity=".8"/><path d="M11 8.300h5M12.800 6.500v5M14.600 6.500v5" stroke="#aaa" stroke-width=".5"/><text x="11.5" y="21.8" text-anchor="middle" font-family="DejaVu Sans, Liberation Sans, sans-serif" font-size="7.500" fill="#111" stroke="#111" stroke-width=".28">Grant</text></svg></div>
<div class="t" style="left:134px;top:409px;letter-spacing:0.18px">Member Grant</div>
<div class="a" style="left:106px;top:427px;width:24px;height:24px"><svg width="24" height="24" viewBox="0 0 24 24" ><path d="M8.600 8L11.600 4.600L16.400 6.200L16.800 11L15.400 12H10.600L10.200 9.400Z" fill="#dcdcdc" stroke="#2a2a2a" stroke-width=".9" stroke-linejoin="round"/><path d="M10.800 6.600h3v3h-3z" fill="#fff" opacity=".8"/><path d="M11 8.300h5M12.800 6.500v5M14.600 6.500v5" stroke="#aaa" stroke-width=".5"/><text x="11.5" y="21.8" text-anchor="middle" font-family="DejaVu Sans, Liberation Sans, sans-serif" font-size="7.500" fill="#111" stroke="#111" stroke-width=".28">Grant</text></svg></div>
<div class="t" style="left:134px;top:433px;letter-spacing:0.18px">Member Grant</div>
<div class="a" style="left:86px;top:451px;width:24px;height:24px"><svg width="24" height="24" viewBox="0 0 24 24" ><g shape-rendering="crispEdges"><rect x="11" y="3" width="2" height="3" fill="#2a2a2a"/><rect x="8" y="6" width="8" height="1" fill="#2a2a2a"/><rect x="8" y="6" width="1" height="4" fill="#2a2a2a"/><rect x="15" y="6" width="1" height="4" fill="#2a2a2a"/><rect x="6" y="9" width="5" height="1" fill="#2a2a2a"/><rect x="13" y="9" width="5" height="1" fill="#2a2a2a"/><rect x="6" y="9" width="1" height="5" fill="#2a2a2a"/><rect x="10" y="9" width="1" height="5" fill="#2a2a2a"/><rect x="13" y="9" width="1" height="5" fill="#2a2a2a"/><rect x="17" y="9" width="1" height="5" fill="#2a2a2a"/><rect x="5" y="13" width="3" height="1" fill="#2a2a2a"/><rect x="9" y="13" width="2" height="1" fill="#2a2a2a"/><rect x="13" y="13" width="2" height="1" fill="#2a2a2a"/><rect x="16" y="13" width="3" height="1" fill="#2a2a2a"/></g><text x="11.5" y="21.8" text-anchor="middle" font-family="DejaVu Sans, Liberation Sans, sans-serif" font-size="7.500" fill="#111" stroke="#111" stroke-width=".28">Grant</text></svg></div>
<div class="t" style="left:114px;top:457px;letter-spacing:0.21px">Hierarchy Grant</div>
<div class="vl" style="left:13px;top:188px;height:109px"></div>
<div class="hl" style="left:14px;top:200px;width:9px"></div>
<div class="hl" style="left:14px;top:224px;width:9px"></div>
<div class="hl" style="left:14px;top:248px;width:9px"></div>
<div class="hl" style="left:14px;top:272px;width:9px"></div>
<div class="hl" style="left:14px;top:296px;width:9px"></div>
<div class="vl" style="left:33px;top:308px;height:13px"></div>
<div class="hl" style="left:34px;top:320px;width:9px"></div>
<div class="vl" style="left:53px;top:332px;height:13px"></div>
<div class="hl" style="left:54px;top:344px;width:9px"></div>
<div class="vl" style="left:73px;top:356px;height:109px"></div>
<div class="hl" style="left:74px;top:368px;width:9px"></div>
<div class="hl" style="left:74px;top:464px;width:9px"></div>
<div class="vl" style="left:93px;top:380px;height:61px"></div>
<div class="hl" style="left:94px;top:392px;width:9px"></div>
<div class="hl" style="left:94px;top:416px;width:9px"></div>
<div class="hl" style="left:94px;top:440px;width:9px"></div>
<div class="a" style="left:8px;top:194px;width:14px;height:14px"><svg width="14" height="14" viewBox="0 0 14 14" ><circle cx="6" cy="6" r="2.300" fill="#fff" stroke="#4668b0" stroke-width="1.500"/><path d="M8.300 6h4.200" stroke="#4668b0" stroke-width="1.800"/></svg></div>
<div class="a" style="left:8px;top:218px;width:14px;height:14px"><svg width="14" height="14" viewBox="0 0 14 14" ><circle cx="6" cy="6" r="2.300" fill="#fff" stroke="#4668b0" stroke-width="1.500"/><path d="M8.300 6h4.200" stroke="#4668b0" stroke-width="1.800"/></svg></div>
<div class="a" style="left:8px;top:242px;width:14px;height:14px"><svg width="14" height="14" viewBox="0 0 14 14" ><circle cx="6" cy="6" r="2.300" fill="#fff" stroke="#4668b0" stroke-width="1.500"/><path d="M8.300 6h4.200" stroke="#4668b0" stroke-width="1.800"/></svg></div>
<div class="a" style="left:8px;top:266px;width:14px;height:14px"><svg width="14" height="14" viewBox="0 0 14 14" ><circle cx="6" cy="6" r="2.300" fill="#fff" stroke="#4668b0" stroke-width="1.500"/><path d="M8.300 6h4.200" stroke="#4668b0" stroke-width="1.800"/></svg></div>
<div class="a" style="left:8px;top:290px;width:14px;height:14px"><svg width="14" height="14" viewBox="0 0 14 14" ><circle cx="6" cy="6" r="2.300" fill="#fff" stroke="#4668b0" stroke-width="1.500"/><path d="M6 8.300v4.500" stroke="#4668b0" stroke-width="2"/></svg></div>
<div class="a" style="left:28px;top:314px;width:14px;height:14px"><svg width="14" height="14" viewBox="0 0 14 14" ><circle cx="6" cy="6" r="2.300" fill="#fff" stroke="#4668b0" stroke-width="1.500"/><path d="M6 8.300v4.500" stroke="#4668b0" stroke-width="2"/></svg></div>
<div class="a" style="left:48px;top:338px;width:14px;height:14px"><svg width="14" height="14" viewBox="0 0 14 14" ><circle cx="6" cy="6" r="2.300" fill="#fff" stroke="#4668b0" stroke-width="1.500"/><path d="M6 8.300v4.500" stroke="#4668b0" stroke-width="2"/></svg></div>
<div class="a" style="left:68px;top:362px;width:14px;height:14px"><svg width="14" height="14" viewBox="0 0 14 14" ><circle cx="6" cy="6" r="2.300" fill="#fff" stroke="#4668b0" stroke-width="1.500"/><path d="M6 8.300v4.500" stroke="#4668b0" stroke-width="2"/></svg></div>
<div class="a" id="rpane"></div>
<div class="a" style="left:5px;top:570px;width:790px;height:2px;background:#fff"></div>
<div class="a" style="left:314px;top:162px;width:2px;height:410px;background:#fff"></div>
<div class="a" style="left:316px;top:570px;width:8px;height:2px;background:#eee"></div>
<div class="a" style="left:324px;top:570px;width:1px;height:1px;background:#7a8a99"></div>
<div class="a" style="left:794px;top:163px;width:2px;height:409px;background:#fff"></div>
<div class="a" style="left:325px;top:163px;width:16px;height:21px;border:1px solid;border-color:#fff #7a8a99 #7a8a99 #fff;background:#eee;box-shadow:inset -1px -1px 0 #b8cfe5"><svg width="14" height="19" viewBox="0 0 14 19" ><path d="M3.200 11h7.600l-3.800-4.200z" fill="#6b7f96"/></svg></div>
<div class="a" style="left:341px;top:163px;width:436px;height:21px;background:#fff"></div>
<div class="a" style="left:341px;top:163px;width:436px;height:19px;border:1px solid #9a9a9a;background:#eee;box-shadow:inset 1px 1px 0 #fff,1px 1px 0 #fff"></div>
<div class="t b" style="left:342px;top:165px;width:437px;text-align:center;letter-spacing:.14px;font-size:14px;line-height:18px;height:18px;color:#6382bf">Hierarchy Grant</div>
<div class="a" style="left:778px;top:163px;width:17px;height:21px;border:1px solid;border-color:#fff #7a8a99 #7a8a99 #fff;background:#eee;box-shadow:inset -1px -1px 0 #b8cfe5"><svg width="15" height="19" viewBox="0 0 15 19" ><path d="M3.800 7.200h7.600l-3.800 4.200z" fill="#6b7f96"/></svg></div>
<div class="tl" style="left:325px;top:184px;width:469px;height:1px"></div>
<div class="tl" style="left:325px;top:184px;width:1px;height:386px"></div>
<div class="a" style="left:326px;top:185px;width:467px;height:17px;background:#eeeeee;box-shadow:inset 1px 1px 0 #fff"></div>
<div class="a" style="left:476px;top:185px;width:1px;height:18px;background:#fff"></div>
<div class="t b" style="left:327px;top:187px;width:149px;text-align:center;letter-spacing:.2px">Attribute</div>
<div class="t b" style="left:476px;top:187px;width:318px;text-align:center;letter-spacing:.4px">Value</div>
<div class="ac" style="top:203px;height:13px"></div><div class="vc" style="top:203px;height:13px"></div>
<div class="t" style="left:326px;top:202px;letter-spacing:0.3px">access</div>
<div class="t" style="left:476px;top:202px;letter-spacing:0px">custom</div>
<div class="ac" style="top:217px;height:13px"></div><div class="vc" style="top:217px;height:13px"></div>
<div class="t" style="left:326px;top:216px;letter-spacing:0.2px">hierarchy</div>
<div class="t" style="left:476px;top:216px;letter-spacing:0.08px">[CUSTOMERS.Customers]</div>
<div class="ac" style="top:231px;height:13px"></div><div class="vc" style="top:231px;height:13px"></div>
<div class="t" style="left:326px;top:230px;letter-spacing:0.36000000000000004px">topLevel</div>
<div class="t" style="left:476px;top:230px;letter-spacing:0.03px">[CUSTOMERS.Customers].[State]</div>
<div class="ac" style="top:245px;height:15px"></div><div class="vc" style="top:245px;height:15px"></div>
<div class="t" style="left:326px;top:245px;letter-spacing:0.28px">bottomLevel</div>
<div class="ac" style="top:261px;height:15px"></div><div class="vc" style="top:261px;height:15px"></div>
<div class="t" style="left:326px;top:261px;letter-spacing:0.26px">rollupPolicy</div>
<div class="tl" style="left:326px;top:202px;width:467px;height:1px"></div>
<div class="tl" style="left:326px;top:216px;width:467px;height:1px"></div>
<div class="tl" style="left:326px;top:230px;width:467px;height:1px"></div>
<div class="tl" style="left:326px;top:244px;width:467px;height:1px"></div>
<div class="tl" style="left:326px;top:260px;width:467px;height:1px"></div>
<div class="tl" style="left:326px;top:276px;width:467px;height:1px"></div>
<div class="tl" style="left:475px;top:185px;width:1px;height:92px"></div>
<div class="tl" style="left:792px;top:185px;width:1px;height:92px"></div>
<div class="a" style="left:326px;top:570px;width:469px;height:1px;background:#fff"></div>
<div class="a" style="left:794px;top:185px;width:1px;height:386px;background:#fff"></div>
<div class="tl" style="left:325px;top:569px;width:469px;height:1px"></div>
<div class="tl" style="left:793px;top:184px;width:1px;height:386px"></div>
<div class="a" style="left:10px;top:573px;width:11px;height:21px"><svg width="11" height="21" viewBox="0 0 11 21" ><defs><linearGradient id="dbg" x1="0" y1="0" x2="0" y2="1"><stop offset="0" stop-color="#ebe8f2"/><stop offset="1" stop-color="#cfbedb"/></linearGradient></defs><g shape-rendering="crispEdges"><rect x="0" y="0" width="11" height="21" fill="#000"/><rect x="1" y="1" width="9" height="19" fill="#fff"/><rect x="2" y="2" width="7" height="17" fill="url(#dbg)"/><rect x="3" y="3" width="5" height="1" fill="#8a8a8a"/><rect x="3" y="4" width="5" height="1" fill="#b0b0b0"/><rect x="3" y="13" width="5" height="1" fill="#b4a8c0"/><rect x="3" y="15" width="5" height="1" fill="#b4a8c0"/><rect x="3" y="17" width="5" height="1" fill="#b4a8c0"/></g></svg></div>
<div class="t b" style="left:32px;top:577px">Database - PUBLIC (HSQL Database Engine)</div>
</div>
</body></html>
